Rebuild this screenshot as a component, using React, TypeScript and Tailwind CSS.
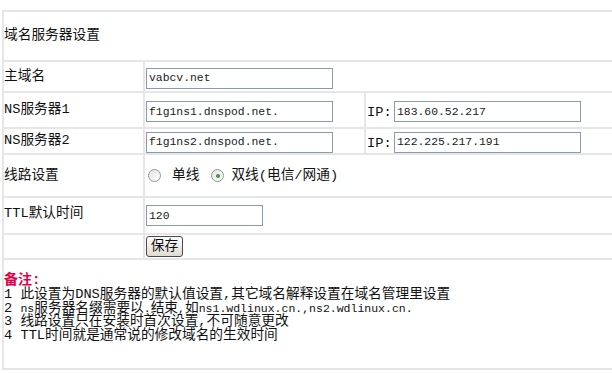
const line = 'border-b-2 border-[#e6e6e6]'
const field =
  "h-[21px] border border-[#8b9aa8] bg-white px-[2px] text-[11.4px] text-[#222] font-['Liberation_Mono','Noto_Sans_CJK_SC',monospace] outline-none"

function Label({ children }: { children: React.ReactNode }) {
  return <div className="w-[139px] shrink-0 flex items-center">{children}</div>
}

function Cell({ children, className = '' }: { children: React.ReactNode; className?: string }) {
  return (
    <div className={`flex items-center border-l-2 border-[#e6e6e6] ${className}`}>{children}</div>
  )
}

function NsRow({ label, ns, ip, height, align }: { label: string; ns: string; ip: string; height: string; align: string }) {
  return (
    <div className={`flex ${height} ${line}`}>
      <Label>{label}</Label>
      <Cell className={`w-[221px] pl-[1px] ${align}`}>
        <input className={`${field} w-[187px]`} defaultValue={ns} />
      </Cell>
      <Cell className={`flex-1 pl-[1px] ${align}`}>
        <span className="w-[27px] pt-[3px]">IP:</span>
        <input className={`${field} w-[187px]`} defaultValue={ip} />
      </Cell>
    </div>
  )
}

function Radio({ checked }: { checked?: boolean }) {
  return (
    <span className="w-[13px] h-[13px] shrink-0 rounded-full border border-[#8c9aa6] bg-gradient-to-br from-[#e4e4e0] to-white flex items-center justify-center">
      {checked && <span className="w-[4px] h-[4px] rounded-full bg-[#3c9a3c]" />}
    </span>
  )
}

export default function App() {
  return (
    <div className="w-[612px] h-[373px] overflow-hidden bg-white pt-[10px] pl-[2px] text-[13.7px] leading-[16px] text-[#111] font-['Liberation_Mono','Noto_Sans_CJK_SC',monospace]">
      <div className="border-l-2 border-t-2 border-[#e6e6e6]">
        <div className={`h-[50px] flex items-center ${line}`}>域名服务器设置</div>

        <div className={`flex h-[31px] ${line}`}>
          <Label>主域名</Label>
          <Cell className="flex-1 pl-[1px] pt-[3px]">
            <input className={`${field} w-[187px]`} defaultValue="vabcv.net" />
          </Cell>
        </div>

        <NsRow label="NS服务器1" ns="f1g1ns1.dnspod.net." ip="183.60.52.217" height="h-[36px]" align="pt-[3px]" />
        <NsRow label="NS服务器2" ns="f1g1ns2.dnspod.net." ip="122.225.217.191" height="h-[26px]" align="pt-[2px]" />

        <div className={`flex h-[43px] ${line}`}>
          <Label>线路设置</Label>
          <Cell className="flex-1">
            <span className="ml-[3px]"><Radio /></span>
            <span className="ml-[11px]">单线</span>
            <span className="ml-[12px]"><Radio checked /></span>
            <span className="ml-[7px]">双线(电信/网通)</span>
          </Cell>
        </div>

        <div className={`flex h-[37px] ${line}`}>
          <Label><span className="-mt-[4px]">TTL默认时间</span></Label>
          <Cell className="flex-1 pl-[1px]">
            <input className={`${field} w-[117px]`} defaultValue="120" />
          </Cell>
        </div>

        <div className={`flex h-[25px] ${line}`}>
          <Label>{''}</Label>
          <Cell className="flex-1 pl-[1px] items-start pt-[1px]">
            <button className="h-[21px] w-[37px] rounded-[3px] border border-[#4a4a4a] bg-gradient-to-b from-white to-[#dedbd2] text-[13.7px] leading-[16px] text-[#111]">
              保存
            </button>
          </Cell>
        </div>

        <div className={`h-[110px] pt-[12px] ${line}`}>
          <div className="text-[14px] font-bold text-[#e0004a]">备注:</div>
          <div className="leading-[13.5px]">
            <div>1 此设置为DNS服务器的默认值设置,其它域名解释设置在域名管理里设置</div>
            <div>
              2 <span className="text-[11.5px]">ns</span>服务器名缀需要以<span className="text-[11.5px]">.</span>结束
              <span className="text-[11.5px]">,</span>如<span className="text-[11.5px]">ns1.wdlinux.cn.,ns2.wdlinux.cn.</span>
            </div>
            <div>3 线路设置只在安装时首次设置,不可随意更改</div>
            <div>4 TTL时间就是通常说的修改域名的生效时间</div>
          </div>
        </div>
      </div>
    </div>
  )
}
